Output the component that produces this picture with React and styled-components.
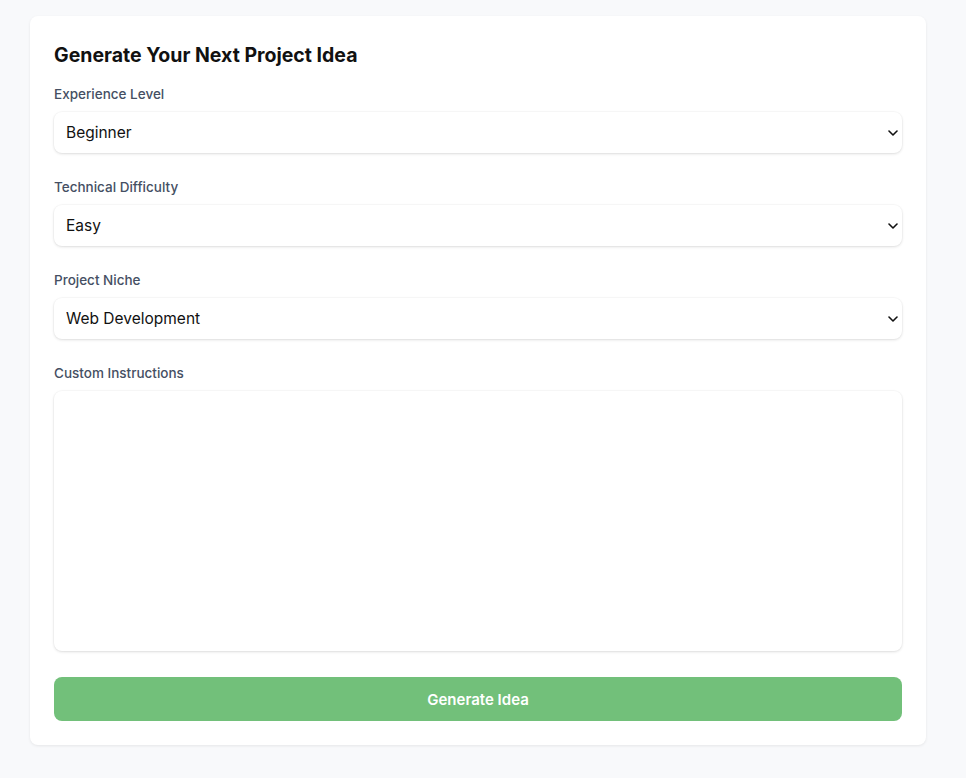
import React, { useState } from 'react';
import styled, { createGlobalStyle } from 'styled-components';

const GlobalStyle = createGlobalStyle`
  * { box-sizing: border-box; }
  body {
    margin: 0;
    background-color: #f8f9fb;
    font-family: Inter, "Noto Sans", sans-serif;
    color: #111;
  }
`;

const levels = ['Beginner', 'Intermediate', 'Advanced'];
const difficulties = ['Easy', 'Medium', 'Hard'];
const niches = ['Web Development', 'Mobile Apps', 'Data Science', 'Game Development'];

const App = () => {
  const [inputs, setInputs] = useState({
    level: 'Beginner',
    difficulty: 'Easy',
    niche: 'Web Development',
    instructions: '',
  });

  const onChange = (e) => {
    setInputs({ ...inputs, [e.target.name]: e.target.value });
  };

  return (
    <>
      <GlobalStyle />
      <Page>
        <Card>
          <Title>Generate Your Next Project Idea</Title>
          <Field>
            <Label>Experience Level</Label>
            <SelectBox>
              <Select name="level" value={inputs.level} onChange={onChange}>
                {levels.map((l) => (
                  <option key={l}>{l}</option>
                ))}
              </Select>
              <Chevron />
            </SelectBox>
          </Field>
          <Field>
            <Label>Technical Difficulty</Label>
            <SelectBox>
              <Select name="difficulty" value={inputs.difficulty} onChange={onChange}>
                {difficulties.map((d) => (
                  <option key={d}>{d}</option>
                ))}
              </Select>
              <Chevron />
            </SelectBox>
          </Field>
          <Field>
            <Label>Project Niche</Label>
            <SelectBox>
              <Select name="niche" value={inputs.niche} onChange={onChange}>
                {niches.map((n) => (
                  <option key={n}>{n}</option>
                ))}
              </Select>
              <Chevron />
            </SelectBox>
          </Field>
          <Field>
            <Label>Custom Instructions</Label>
            <TextArea name="instructions" value={inputs.instructions} onChange={onChange} />
          </Field>
          <GenerateButton type="button">Generate Idea</GenerateButton>
        </Card>
      </Page>
    </>
  );
};

const Chevron = () => (
  <ChevronIcon viewBox="0 0 10 6" width="10" height="6">
    <path d="M1 1l4 4 4-4" fill="none" stroke="#111" strokeWidth="1.6" strokeLinecap="round" strokeLinejoin="round" />
  </ChevronIcon>
);

export default App;

const Page = styled.div`
  padding: 16px 40px 33px 30px;
`;

const Card = styled.div`
  background-color: #fff;
  border-radius: 8px;
  box-shadow: 0 1px 3px rgba(0, 0, 0, 0.08);
  padding: 27px 24px 24px;
  display: flex;
  flex-direction: column;
`;

const Title = styled.h2`
  margin: 0 0 18px;
  font-size: 19.5px;
  font-weight: 700;
  line-height: 24px;
  color: #111;
`;

const Field = styled.div`
  display: flex;
  flex-direction: column;
  margin-bottom: 25px;
`;

const Label = styled.label`
  font-size: 13.5px;
  font-weight: 500;
  line-height: 18px;
  color: #454f63;
  margin-bottom: 9px;
`;

const SelectBox = styled.div`
  position: relative;
`;

const Select = styled.select`
  width: 100%;
  height: 41px;
  appearance: none;
  border: none;
  border-radius: 8px;
  background-color: #fff;
  box-shadow: 0 1px 3px rgba(0, 0, 0, 0.12), 0 0 0 1px rgba(0, 0, 0, 0.02);
  padding: 0 32px 0 12px;
  font-family: Inter, "Noto Sans", sans-serif;
  font-size: 15.5px;
  color: #111;
  outline: none;
`;

const ChevronIcon = styled.svg`
  position: absolute;
  right: 4px;
  top: 18px;
  pointer-events: none;
`;

const TextArea = styled.textarea`
  width: 100%;
  height: 260px;
  border: none;
  border-radius: 8px;
  background-color: #fff;
  box-shadow: 0 1px 3px rgba(0, 0, 0, 0.12), 0 0 0 1px rgba(0, 0, 0, 0.02);
  padding: 12px;
  resize: none;
  font-family: Inter, "Noto Sans", sans-serif;
  font-size: 15px;
  outline: none;
`;

const GenerateButton = styled.button`
  height: 44px;
  margin-top: 1px;
  border: none;
  border-radius: 8px;
  background-color: #72c07a;
  color: #fff;
  font-family: Inter, "Noto Sans", sans-serif;
  font-size: 15px;
  font-weight: 600;
  cursor: pointer;
`;
